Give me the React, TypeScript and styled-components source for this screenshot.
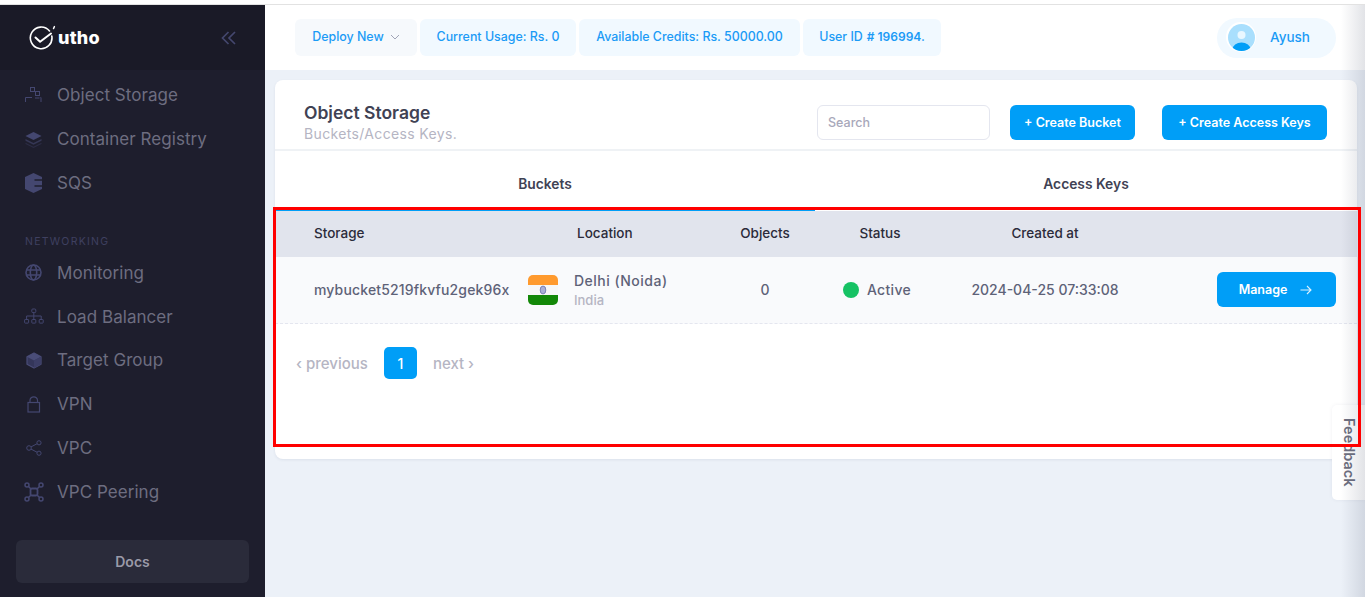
import React from "react";
import styled, { createGlobalStyle } from "styled-components";

const GlobalStyle = createGlobalStyle`
  html, body {
    margin: 0;
    padding: 0;
    height: 100%;
    overflow: hidden;
    background: #ffffff;
    font-family: "Inter", "Open Sans", sans-serif;
  }
  * { box-sizing: border-box; }
`;

const Page = styled.div`
  position: relative;
  width: 1365px;
  height: 597px;
  padding-top: 5px;
  overflow: hidden;
  display: flex;
  &::before {
    content: "";
    position: absolute;
    left: 0;
    right: 0;
    top: 4px;
    height: 1px;
    background: #e2e2e2;
  }
`;

const Sidebar = styled.aside`
  width: 265px;
  flex-shrink: 0;
  background: #1e1e2d;
  display: flex;
  flex-direction: column;
`;

const Brand = styled.div`
  height: 65px;
  background: #1a1a27;
  display: flex;
  align-items: center;
  justify-content: space-between;
  padding: 0 29px;
`;

const Logo = styled.div`
  display: flex;
  align-items: center;
  gap: 2px;
  color: #ffffff;
  font-size: 18px;
  font-weight: 800;
  letter-spacing: 0.2px;
`;

const Collapse = styled.div`
  color: #44476e;
  display: flex;
`;

const Nav = styled.nav`
  flex: 1;
  display: flex;
  flex-direction: column;
  padding-top: 3.5px;
`;

const NavItem = styled.div`
  height: 43.8px;
  display: flex;
  align-items: center;
  gap: 15px;
  padding-left: 25px;
  color: #6d6d80;
  font-size: 17px;
  letter-spacing: 0.05px;
`;

const NavIcon = styled.span`
  width: 17px;
  height: 20px;
  display: flex;
  align-items: center;
  justify-content: center;
  color: #444770;
  flex-shrink: 0;
  svg { flex-shrink: 0; }
`;

const NavSection = styled.div`
  margin-top: 28px;
  height: 18px;
  padding-left: 25px;
  color: #3f4060;
  font-size: 10.5px;
  letter-spacing: 1.25px;
  display: flex;
  align-items: center;
`;

const Docs = styled.div`
  margin: 0 16px 14px;
  height: 43px;
  padding-bottom: 1px;
  border-radius: 6px;
  background: #2a2b3a;
  color: #9a9aa8;
  font-size: 14px;
  font-weight: 600;
  display: flex;
  align-items: center;
  justify-content: center;
`;

const Main = styled.main`
  flex: 1;
  min-width: 0;
  background: #ecf1f8;
  display: flex;
  flex-direction: column;
`;

const TopBar = styled.header`
  height: 65px;
  background: #ffffff;
  display: flex;
  align-items: center;
  gap: 3px;
  padding: 0 29px 1px 30px;
`;

const Chip = styled.div<{ $muted?: boolean; $w: number }>`
  width: ${(p) => p.$w}px;
  height: 37px;
  padding-bottom: 1px;
  border-radius: 6px;
  background: ${(p) => (p.$muted ? "#f6f9fc" : "#f1f9ff")};
  color: #1b9bf6;
  font-size: 12.4px;
  font-weight: 500;
  display: flex;
  align-items: center;
  justify-content: center;
  gap: 6px;
  white-space: nowrap;
  strong { font-weight: 600; font-size: 12px; margin-left: -2px; }
`;

const Profile = styled.div`
  margin-left: auto;
  margin-top: 1px;
  width: 119px;
  height: 40px;
  padding: 0 0 1px 9px;
  border-radius: 20px;
  background: #f1f9ff;
  color: #1b9bf6;
  font-size: 13.5px;
  font-weight: 500;
  display: flex;
  align-items: center;
  gap: 14px;
`;

const Avatar = styled.span`
  width: 30px;
  height: 30px;
  display: flex;
  border-radius: 50%;
  background: #ffffff;
  align-items: center;
  justify-content: center;
`;

const Card = styled.section`
  margin: 10px 8px 0 10px;
  height: 379px;
  background: #ffffff;
  border-radius: 8px;
  box-shadow: 0 1px 3px rgba(40, 50, 90, 0.08);
  overflow: hidden;
`;

const CardHead = styled.div`
  height: 71px;
  border-bottom: 2px solid #eff2f5;
  display: flex;
  align-items: center;
  padding: 15px 30px 0 29px;
`;

const TitleBlock = styled.div`
  flex: 1;
  padding-top: 1px;
`;

const Title = styled.h1`
  margin: 0;
  color: #3f4254;
  font-size: 17.5px;
  line-height: 22px;
  font-weight: 600;
`;

const Subtitle = styled.p`
  margin: 0;
  color: #b5b5c3;
  font-size: 14px;
  line-height: 20px;
  letter-spacing: 0.35px;
`;

const Search = styled.input`
  width: 173px;
  height: 35px;
  padding: 0 10px;
  border: 1px solid #e4e6ef;
  border-radius: 6px;
  outline: none;
  font: 500 12.5px "Inter", sans-serif;
  color: #3f4254;
  &::placeholder { color: #a8a8ba; }
`;

const PrimaryButton = styled.button<{ $w: number; $left?: number }>`
  width: ${(p) => p.$w}px;
  height: 35px;
  margin-left: ${(p) => p.$left ?? 0}px;
  border: 0;
  border-radius: 6px;
  background: #009ef7;
  color: #ffffff;
  font: 600 12.5px "Inter", sans-serif;
  display: flex;
  align-items: center;
  justify-content: center;
`;

const ManageButton = styled(PrimaryButton)`
  gap: 13px;
  padding-right: 8px;
`;

const Tabs = styled.div`
  display: grid;
  grid-template-columns: 540px 1fr;
  height: 60px;
`;

const Tab = styled.div<{ $active?: boolean }>`
  display: flex;
  align-items: center;
  justify-content: center;
  padding-top: 8px;
  color: #3f4254;
  font-size: 13.8px;
  font-weight: 600;
  border-bottom: 3px solid ${(p) => (p.$active ? "#009ef7" : "transparent")};
`;

const columns = "253px 177px 120px 110px 220px 1fr";

const TableHead = styled.div`
  height: 46px;
  padding-bottom: 2px;
  background: #e1e4ed;
  display: grid;
  grid-template-columns: ${columns};
  align-items: center;
  color: #2b2b3a;
  font-size: 13.5px;
  font-weight: 500;
`;

const TableRow = styled.div`
  height: 67px;
  padding-bottom: 1px;
  background: #f9fafc;
  border-bottom: 1px dashed #e4e6ef;
  display: grid;
  grid-template-columns: ${columns};
  align-items: center;
  color: #5e6278;
  font-size: 14px;
  font-weight: 500;
`;

const Cell = styled.div<{ $center?: boolean; $left?: number }>`
  padding-left: ${(p) => p.$left ?? 0}px;
  text-align: ${(p) => (p.$center ? "center" : "left")};
  white-space: nowrap;
`;

const BucketName = styled(Cell)`
  letter-spacing: 0.15px;
`;

const LocationCell = styled.div`
  display: flex;
  align-items: center;
  gap: 16px;
`;

const FlagWrap = styled.span`
  width: 30px;
  height: 30px;
  border-radius: 5px;
  overflow: hidden;
  display: flex;
  flex-shrink: 0;
`;

const City = styled.div`
  font-size: 14px;
  line-height: 20px;
  letter-spacing: 0.5px;
`;

const Country = styled.div`
  color: #b5b5c3;
  font-size: 13px;
  line-height: 18px;
`;

const StatusCell = styled.div`
  display: flex;
  align-items: center;
  justify-content: center;
  gap: 8px;
  letter-spacing: 0.3px;
  padding-right: 6px;
`;

const Dot = styled.span`
  width: 16px;
  height: 16px;
  border-radius: 50%;
  background: #16c264;
`;

const ActionCell = styled.div`
  display: flex;
  justify-content: flex-end;
  padding-right: 21px;
`;

const Pager = styled.div`
  display: flex;
  align-items: center;
  padding: 23px 0 0 21px;
  color: #b5b5c3;
  font-size: 15px;
  font-weight: 500;
`;

const PageNumber = styled.span`
  width: 33px;
  height: 32px;
  margin: 0 16px;
  border-radius: 5px;
  background: #009ef7;
  color: #ffffff;
  font-size: 14px;
  display: flex;
  align-items: center;
  justify-content: center;
`;

const EdgeShadow = styled.div`
  position: absolute;
  top: 5px;
  right: 0;
  bottom: 0;
  width: 24px;
  pointer-events: none;
  background: linear-gradient(to right, rgba(30, 40, 70, 0), rgba(30, 40, 70, 0.13));
`;

const Feedback = styled.div`
  position: absolute;
  top: 405px;
  right: 0;
  width: 33px;
  height: 95px;
  background: #ffffff;
  border-radius: 5px 0 0 5px;
  color: #6d6f80;
  font-size: 14.5px;
  font-weight: 600;
  display: flex;
  align-items: center;
  justify-content: center;
  padding-left: 2px;
  writing-mode: vertical-rl;
  box-shadow: 0 0 4px rgba(30, 40, 70, 0.06);
`;

const Annotation = styled.div`
  position: absolute;
  left: 273px;
  top: 207px;
  width: 1088px;
  height: 240px;
  border: 3px solid #ff0000;
  pointer-events: none;
`;

const LogoMark = () => (
  <svg width="27" height="26" viewBox="0 0 27 26" fill="none" stroke="#fff">
    <path d="M20.500 6A10.800 10.800 0 1 0 22.800 11" strokeWidth="1.600" strokeLinecap="round" />
    <path d="M6.500 12.500l4.600 4.300L22 8.500" strokeWidth="2" strokeLinecap="round" strokeLinejoin="round" />
    <path d="M25.400 1.600l-.9 2" strokeWidth="1.400" strokeLinecap="round" />
  </svg>
);

const ChevronsLeft = () => (
  <svg width="15" height="14" viewBox="0 0 15 14" fill="none" stroke="currentColor" strokeWidth="1.700">
    <path d="M7.500 1L1.500 7l6 6M14 1L8 7l6 6" />
  </svg>
);

const StorageIcon = () => (
  <svg width="17" height="16" viewBox="0 0 17 16" fill="none" stroke="currentColor" strokeWidth="1">
    <rect x="5.500" y=".5" width="4" height="4" />
    <rect x="10.500" y="4.500" width="4" height="4" />
    <path d="M.5 15v-4.500H7M10 11h4.500M15.500 10.500h.5V15" />
  </svg>
);

const LayersIcon = () => (
  <svg width="17" height="17" viewBox="0 0 17 17" fill="currentColor">
    <path d="M8.500 1l8 4-8 4-8-4z" />
    <path d="M.5 8l8 4 8-4v1.800l-8 4-8-4z" opacity=".6" />
    <path d="M.5 11.700l8 4 8-4v1.300l-8 4-8-4z" opacity=".35" />
  </svg>
);

const SqsIcon = () => (
  <svg width="17" height="20" viewBox="0 0 17 20" fill="currentColor">
    <path d="M8.500 0L17 4v2.200H9.500v1.500H17v4.600H9.500v1.500H17V16l-8.500 4L0 16V4z" />
  </svg>
);

const GlobeIcon = () => (
  <svg width="17" height="17" viewBox="0 0 17 17" fill="none" stroke="currentColor" strokeWidth="1.600">
    <circle cx="8.500" cy="8.500" r="7.500" />
    <ellipse cx="8.500" cy="8.500" rx="3.200" ry="7.500" />
    <path d="M1.200 6h14.600M1.200 11h14.600" />
  </svg>
);

const TreeIcon = () => (
  <svg width="20" height="17" viewBox="0 0 20 17" fill="none" stroke="currentColor" strokeWidth="1">
    <rect x="7.800" y="1" width="4" height="3.600" rx="1" />
    <rect x=".6" y="11.500" width="4" height="3.600" rx=".6" />
    <rect x="7.800" y="11.500" width="4" height="3.600" rx=".6" />
    <rect x="15.200" y="11.500" width="4" height="3.600" rx=".6" />
    <path d="M9.800 4.600v6.900M2.600 11.500V8h14.600v3.500" />
  </svg>
);

const CubeIcon = () => (
  <svg width="16" height="17" viewBox="0 0 16 17">
    <path d="M8 1l7 3.800v7.400L8 16l-7-3.800V4.800z" fill="#34365a" stroke="#4a4d78" strokeWidth="1.200" strokeLinejoin="round" />
    <path d="M8 1l7 3.800L8 8.600 1 4.800z" fill="#4a4d78" />
    <path d="M8 8.600V16l7-3.800V4.800z" fill="#3c3e66" />
  </svg>
);

const LockIcon = () => (
  <svg width="14" height="18" viewBox="0 0 14 18" fill="none" stroke="currentColor" strokeWidth="1.200">
    <rect x="1" y="7.500" width="11.500" height="9.500" />
    <path d="M3 7.500V5a3.800 3.800 0 0 1 7.500 0v2.500" />
  </svg>
);

const ShareIcon = () => (
  <svg width="16" height="16" viewBox="0 0 16 16" fill="none" stroke="currentColor" strokeWidth="1">
    <circle cx="3" cy="8" r="2.300" />
    <circle cx="13" cy="2.800" r="2.100" />
    <circle cx="13" cy="13.200" r="2.100" />
    <path d="M5 6.900l6.200-3.200M5 9.100l6.200 3.200" />
  </svg>
);

const PeeringIcon = () => (
  <svg width="20" height="20" viewBox="0 0 20 20" fill="none" stroke="currentColor" strokeWidth="1.500">
    <rect x="6.500" y="6.500" width="7" height="7" rx="1.500" strokeWidth="1.800" />
    <circle cx="3" cy="3" r="2" />
    <circle cx="17" cy="3" r="2" />
    <circle cx="3" cy="17" r="2" />
    <circle cx="17" cy="17" r="2" />
    <path d="M4.500 4.500l2.500 2.500M15.500 4.500L13 7M4.500 15.500L7 13M15.500 15.500L13 13" />
  </svg>
);

const ChevronDown = () => (
  <svg width="10" height="6" viewBox="0 0 10 6" fill="none" stroke="#a1a5b7" strokeWidth="1">
    <path d="M1 1l4 4 4-4" />
  </svg>
);

const ArrowRight = () => (
  <svg width="12" height="10" viewBox="0 0 12 10" fill="none" stroke="#d8f0ff" strokeWidth="1.100">
    <path d="M.5 5h10.500M7 1l4 4-4 4" />
  </svg>
);

const AvatarIcon = () => (
  <svg width="27" height="27" viewBox="0 0 27 27">
    <defs>
      <clipPath id="avatar-clip">
        <circle cx="13.500" cy="13.500" r="13.500" />
      </clipPath>
    </defs>
    <g clipPath="url(#avatar-clip)">
      <rect width="27" height="27" fill="#a9dffd" />
      <circle cx="13.500" cy="11" r="4" fill="#e9f7ff" />
      <ellipse cx="13.500" cy="25.500" rx="9" ry="7" fill="#009ef7" />
    </g>
  </svg>
);

const IndiaFlag = () => (
  <svg width="30" height="30" viewBox="0 0 30 30">
    <rect width="30" height="10" fill="#ff9a2e" />
    <rect y="10" width="30" height="10" fill="#f7f7f7" />
    <rect y="20" width="30" height="10" fill="#138808" />
    <ellipse cx="15" cy="15" rx="2.800" ry="4" fill="#aab0d8" stroke="#6a70a8" strokeWidth="0.800" />
  </svg>
);

const navTop = [
  { label: "Object Storage", icon: <StorageIcon /> },
  { label: "Container Registry", icon: <LayersIcon /> },
  { label: "SQS", icon: <SqsIcon /> },
];

const navNetworking = [
  { label: "Monitoring", icon: <GlobeIcon /> },
  { label: "Load Balancer", icon: <TreeIcon /> },
  { label: "Target Group", icon: <CubeIcon /> },
  { label: "VPN", icon: <LockIcon /> },
  { label: "VPC", icon: <ShareIcon /> },
  { label: "VPC Peering", icon: <PeeringIcon /> },
];

const App: React.FC = () => {
  return (
    <Page>
      <GlobalStyle />
      <Sidebar>
        <Brand>
          <Logo>
            <LogoMark />
            utho
          </Logo>
          <Collapse>
            <ChevronsLeft />
          </Collapse>
        </Brand>
        <Nav>
          {navTop.map((item) => (
            <NavItem key={item.label}>
              <NavIcon>{item.icon}</NavIcon>
              {item.label}
            </NavItem>
          ))}
          <NavSection>NETWORKING</NavSection>
          {navNetworking.map((item) => (
            <NavItem key={item.label}>
              <NavIcon>{item.icon}</NavIcon>
              {item.label}
            </NavItem>
          ))}
        </Nav>
        <Docs>Docs</Docs>
      </Sidebar>
      <Main>
        <TopBar>
          <Chip $muted $w={122}>
            Deploy New <ChevronDown />
          </Chip>
          <Chip $w={156}>Current Usage: Rs. 0</Chip>
          <Chip $w={221}>Available Credits: Rs. 50000.00</Chip>
          <Chip $w={138}>
            User ID <strong># 196994.</strong>
          </Chip>
          <Profile>
            <Avatar>
              <AvatarIcon />
            </Avatar>
            Ayush
          </Profile>
        </TopBar>
        <Card>
          <CardHead>
            <TitleBlock>
              <Title>Object Storage</Title>
              <Subtitle>Buckets/Access Keys.</Subtitle>
            </TitleBlock>
            <Search placeholder="Search" />
            <PrimaryButton $w={125} $left={20}>
              + Create Bucket
            </PrimaryButton>
            <PrimaryButton $w={165} $left={27}>
              + Create Access Keys
            </PrimaryButton>
          </CardHead>
          <Tabs>
            <Tab $active>Buckets</Tab>
            <Tab>Access Keys</Tab>
          </Tabs>
          <TableHead>
            <Cell $left={39}>Storage</Cell>
            <Cell $left={49}>Location</Cell>
            <Cell $center>Objects</Cell>
            <Cell $center>Status</Cell>
            <Cell $center>Created at</Cell>
            <Cell />
          </TableHead>
          <TableRow>
            <BucketName $left={39}>mybucket5219fkvfu2gek96x</BucketName>
            <LocationCell>
              <FlagWrap>
                <IndiaFlag />
              </FlagWrap>
              <div>
                <City>Delhi (Noida)</City>
                <Country>India</Country>
              </div>
            </LocationCell>
            <Cell $center>0</Cell>
            <StatusCell>
              <Dot />
              Active
            </StatusCell>
            <Cell $center>2024-04-25 07:33:08</Cell>
            <ActionCell>
              <ManageButton $w={119}>
                Manage <ArrowRight />
              </ManageButton>
            </ActionCell>
          </TableRow>
          <Pager>
            ‹ previous
            <PageNumber>1</PageNumber>
            next ›
          </Pager>
        </Card>
      </Main>
      <Feedback>Feedback</Feedback>
      <EdgeShadow />
      <Annotation />
    </Page>
  );
};

export default App;
